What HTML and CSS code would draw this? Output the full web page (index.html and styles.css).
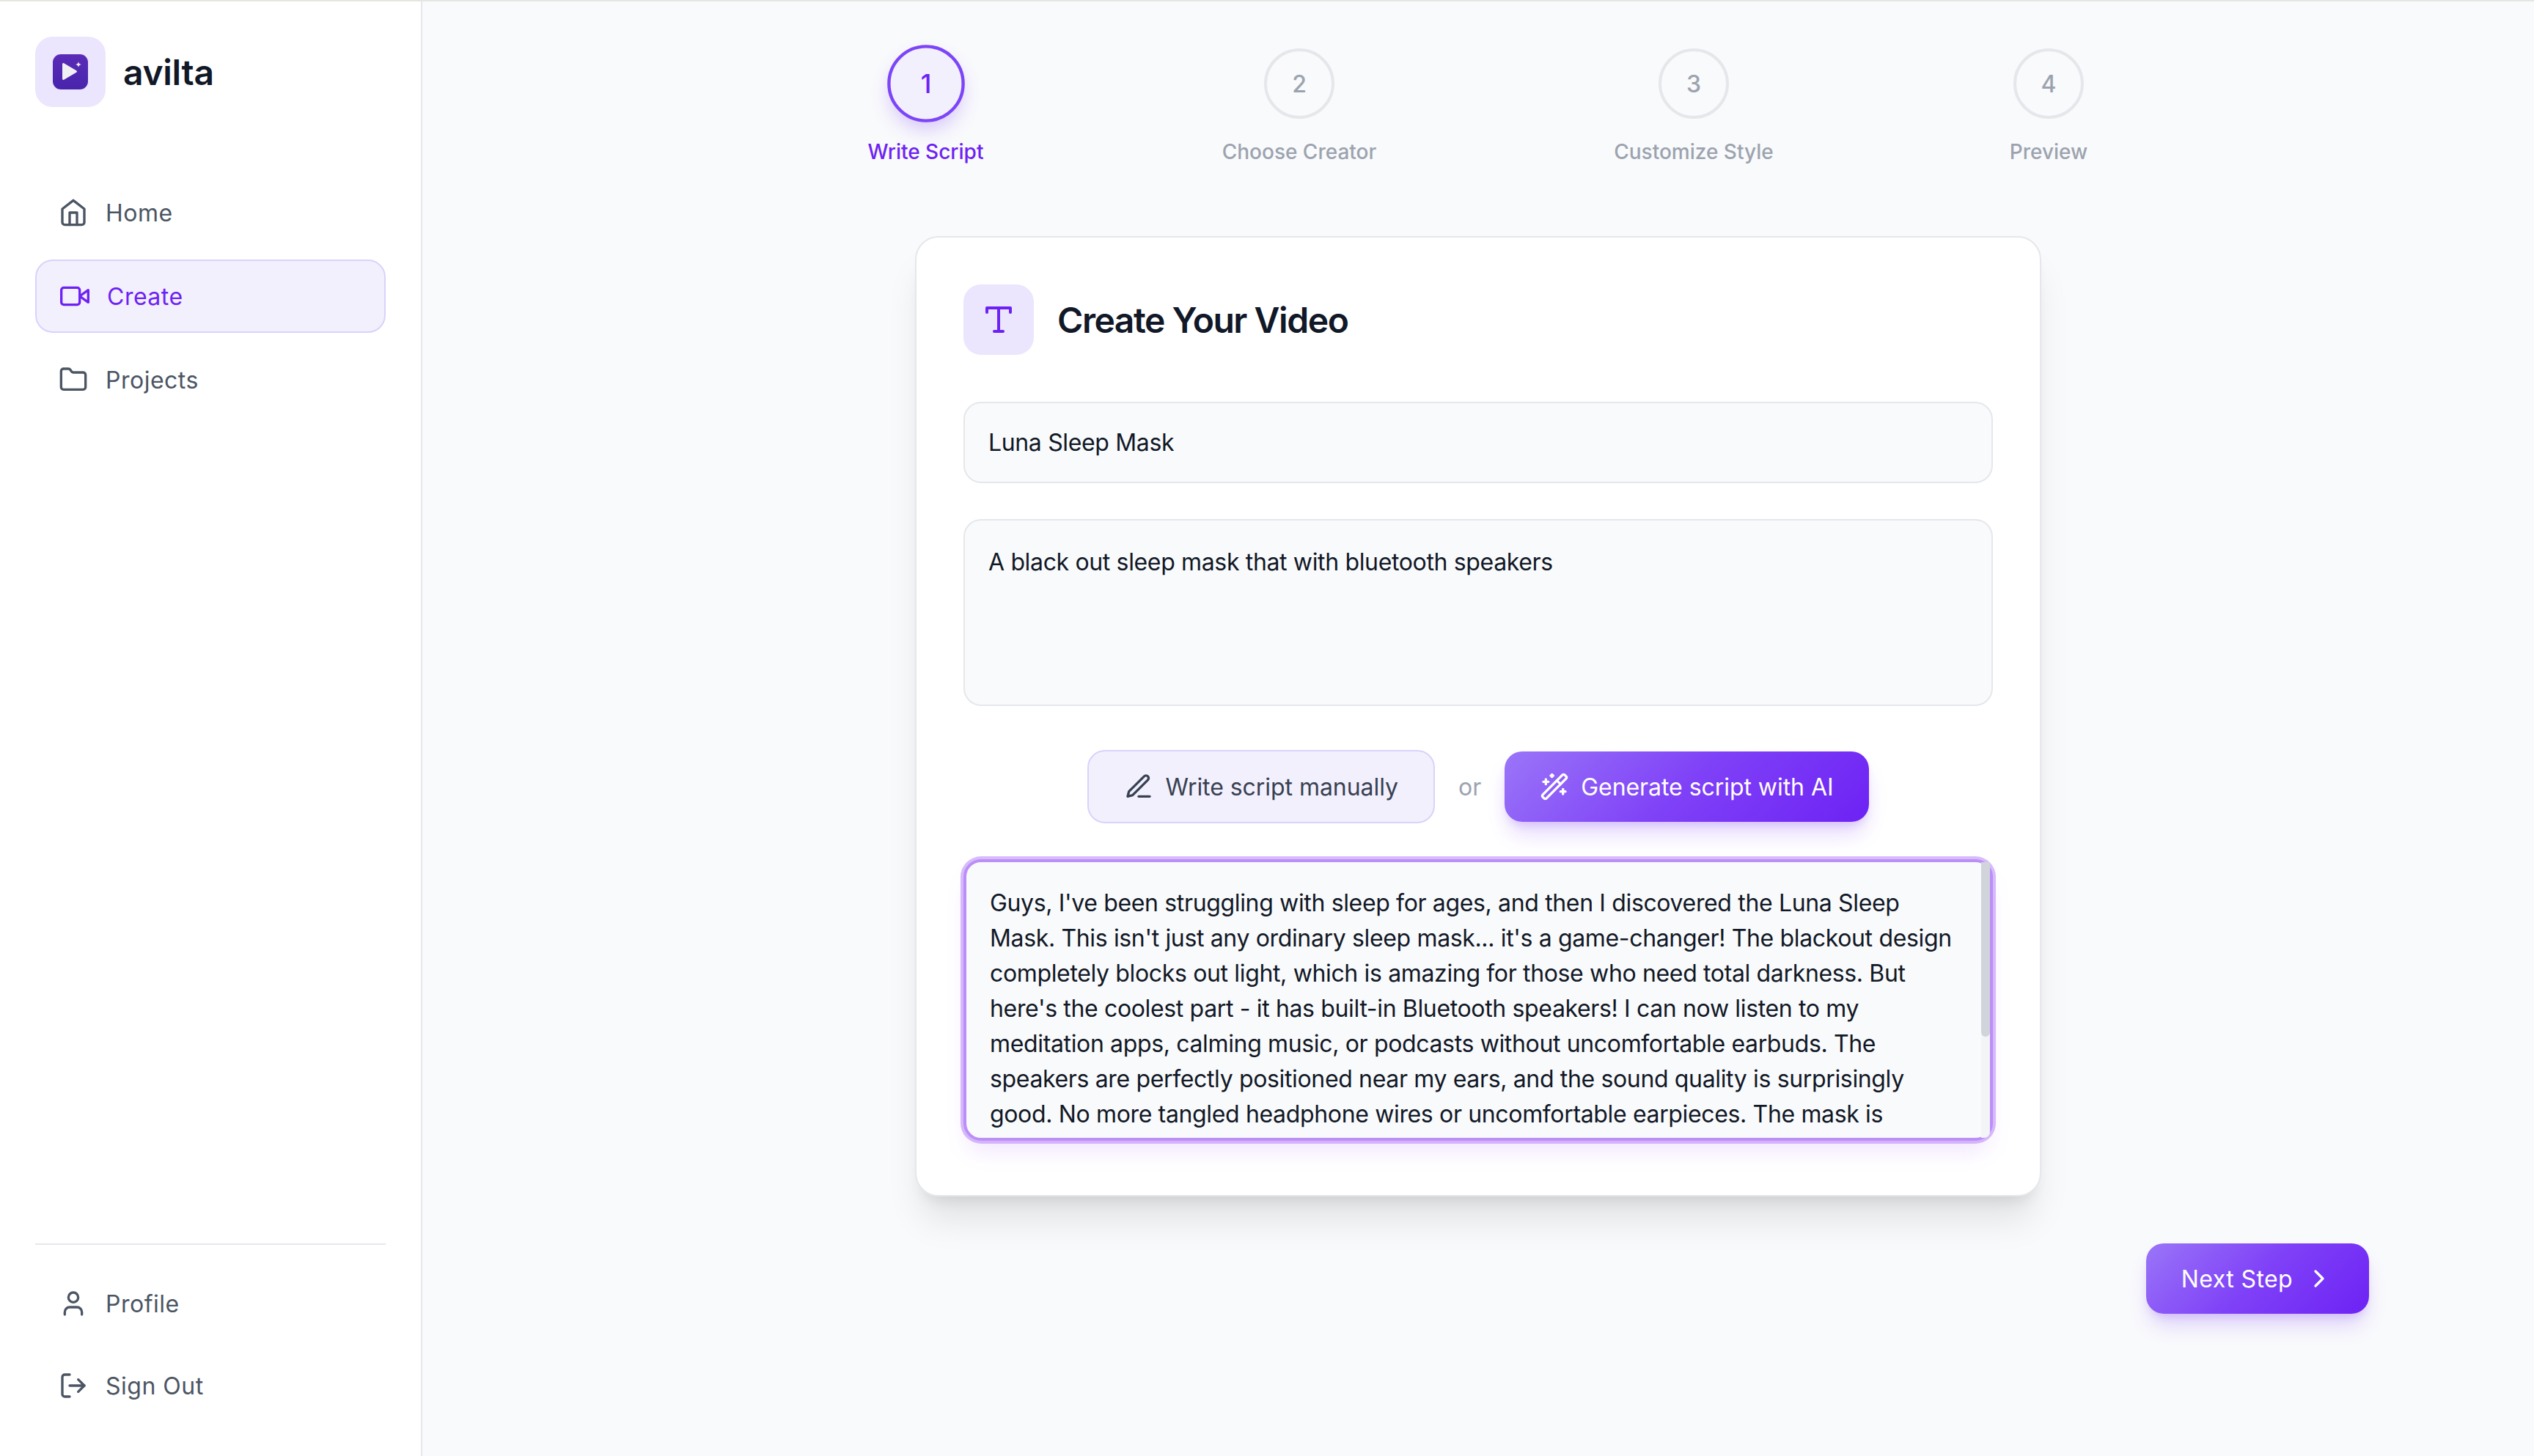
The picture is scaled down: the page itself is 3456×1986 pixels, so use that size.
FILE: index.html
```html
<!DOCTYPE html>
<html lang="en">
<head>
  <meta charset="UTF-8">
  <meta name="viewport" content="width=device-width, initial-scale=1.0">
  <title>avilta - Create</title>
  <link rel="stylesheet" href="styles.css">
</head>
<body>
  <div class="app">

    <!-- sidebar -->
    <aside class="sidebar">
      <div class="brand">
        <div class="brand-box">
          <svg class="brand-logo" viewBox="0 0 48 48">
            <defs>
              <linearGradient id="logo-bg" x1="0" y1="0" x2="0" y2="1">
                <stop offset="0" stop-color="#5a2bb8"/>
                <stop offset="1" stop-color="#4824ab"/>
              </linearGradient>
            </defs>
            <rect width="48" height="48" rx="11" fill="url(#logo-bg)"/>
            <path d="M13 13.5c0-1.2 1.2-1.9 2.2-1.3l17 10c1 .6 1 2 0 2.6l-17 10c-1 .6-2.2-.1-2.2-1.3z" fill="#f1f0f3"/>
            <path d="M35 10c.5 2.7 1.3 3.5 4 4-2.7.5-3.5 1.3-4 4-.5-2.7-1.3-3.5-4-4 2.7-.5 3.5-1.3 4-4z" fill="#f1f0f3"/>
          </svg>
        </div>
        <span class="brand-name">avilta</span>
      </div>

      <nav class="nav">
        <a class="nav-item">
          <svg class="icon" viewBox="0 0 24 24"><path d="m3 9 9-7 9 7v11a2 2 0 0 1-2 2H5a2 2 0 0 1-2-2z"/><polyline points="9 22 9 12 15 12 15 22"/></svg>
          Home
        </a>
        <a class="nav-item active">
          <svg class="icon" viewBox="0 0 24 24"><polygon points="23 7 16 12 23 17 23 7"/><rect x="1" y="5" width="15" height="14" rx="2"/></svg>
          Create
        </a>
        <a class="nav-item">
          <svg class="icon" viewBox="0 0 24 24"><path d="M20 20a2 2 0 0 0 2-2V8a2 2 0 0 0-2-2h-7.9a2 2 0 0 1-1.69-.9L9.6 3.9A2 2 0 0 0 7.93 3H4a2 2 0 0 0-2 2v13a2 2 0 0 0 2 2Z"/></svg>
          Projects
        </a>
      </nav>

      <div class="nav nav-bottom">
        <a class="nav-item">
          <svg class="icon" viewBox="0 0 24 24"><path d="M19 21v-2a4 4 0 0 0-4-4H9a4 4 0 0 0-4 4v2"/><circle cx="12" cy="7" r="4"/></svg>
          Profile
        </a>
        <a class="nav-item">
          <svg class="icon" viewBox="0 0 24 24"><path d="M9 21H5a2 2 0 0 1-2-2V5a2 2 0 0 1 2-2h4"/><polyline points="16 17 21 12 16 7"/><line x1="21" y1="12" x2="9" y2="12"/></svg>
          Sign Out
        </a>
      </div>
    </aside>

    <!-- main -->
    <main class="main">
      <ol class="steps">
        <li class="step current"><span class="step-num">1</span><span class="step-label">Write Script</span></li>
        <li class="step"><span class="step-num">2</span><span class="step-label">Choose Creator</span></li>
        <li class="step"><span class="step-num">3</span><span class="step-label">Customize Style</span></li>
        <li class="step"><span class="step-num">4</span><span class="step-label">Preview</span></li>
      </ol>

      <section class="card">
        <header class="card-head">
          <div class="card-icon">
            <svg class="icon icon-lg" viewBox="0 0 24 24"><polyline points="4 7 4 4 20 4 20 7"/><line x1="9" y1="20" x2="15" y2="20"/><line x1="12" y1="4" x2="12" y2="20"/></svg>
          </div>
          <h1>Create Your Video</h1>
        </header>

        <input class="field field-title" type="text" value="Luna Sleep Mask">
        <textarea class="field field-desc">A black out sleep mask that with bluetooth speakers</textarea>

        <div class="script-actions">
          <button class="btn btn-soft">
            <svg class="icon" viewBox="0 0 24 24"><path d="M12 20h9"/><path d="M16.5 3.5a2.12 2.12 0 0 1 3 3L7 19l-4 1 1-4Z"/></svg>
            Write script manually
          </button>
          <span class="or">or</span>
          <button class="btn btn-primary">
            <svg class="icon" viewBox="0 0 24 24"><path d="m21.64 3.64-1.28-1.28a1.21 1.21 0 0 0-1.72 0L2.36 18.64a1.21 1.21 0 0 0 0 1.72l1.28 1.28a1.2 1.2 0 0 0 1.72 0L21.64 5.36a1.2 1.2 0 0 0 0-1.72"/><path d="m14 7 3 3"/><path d="M5 6v4"/><path d="M19 14v4"/><path d="M10 2v2"/><path d="M7 8H3"/><path d="M21 16h-4"/><path d="M11 3H9"/></svg>
            Generate script with AI
          </button>
        </div>

        <div class="script-box">
          <textarea class="script" wrap="off">Guys, I've been struggling with sleep for ages, and then I discovered the Luna Sleep
Mask. This isn't just any ordinary sleep mask... it's a game-changer! The blackout design
completely blocks out light, which is amazing for those who need total darkness. But
here's the coolest part - it has built-in Bluetooth speakers! I can now listen to my
meditation apps, calming music, or podcasts without uncomfortable earbuds. The
speakers are perfectly positioned near my ears, and the sound quality is surprisingly
good. No more tangled headphone wires or uncomfortable earpieces. The mask is</textarea>
          <div class="scroll-track"><div class="scroll-thumb"></div></div>
        </div>
      </section>

      <div class="footer-actions">
        <button class="btn btn-primary">
          Next Step
          <svg class="icon" viewBox="0 0 24 24"><path d="m9 18 6-6-6-6"/></svg>
        </button>
      </div>
    </main>
  </div>
</body>
</html>
```

FILE: styles.css
```css
* {
  box-sizing: border-box;
}

html, body {
  height: 100%;
}

body {
  margin: 0;
  font-family: 'Inter', 'Noto Sans', sans-serif;
  font-size: 32px;
  color: #111827;
  background-color: #f9fafc;
  border-top: 2px solid #e5e5e1;
  overflow: hidden;
}

.app {
  display: flex;
  height: 100%;
}

.icon {
  width: 40px;
  height: 40px;
  flex-shrink: 0;
  fill: none;
  stroke: currentColor;
  stroke-width: 2;
  stroke-linecap: round;
  stroke-linejoin: round;
}

.icon-lg {
  width: 48px;
  height: 48px;
}

/* sidebar */
.sidebar {
  width: 576px;
  flex-shrink: 0;
  display: flex;
  flex-direction: column;
  padding: 48px;
  background-color: #fff;
  border-right: 2px solid #e5e7eb;
}

.brand {
  display: flex;
  align-items: center;
  gap: 24px;
  margin-bottom: 96px;
}

.brand-box {
  width: 96px;
  height: 96px;
  display: flex;
  align-items: center;
  justify-content: center;
  background-color: #ebe5fd;
  border-radius: 24px;
}

.brand-logo {
  width: 48px;
  height: 48px;
}

.brand-name {
  font-size: 48px;
  font-weight: 600;
  letter-spacing: -0.3px;
}

.nav {
  display: flex;
  flex-direction: column;
  gap: 16px;
}

.nav-item {
  display: flex;
  align-items: center;
  gap: 24px;
  height: 96px;
  padding: 0 32px;
  color: #4b5563;
  border-radius: 24px;
  letter-spacing: 0.5px;
}

.nav-item.active {
  height: 100px;
  color: #6d22f4;
  background-color: #f3f0fe;
  border: 2px solid #d9d2fb;
}

.nav-bottom {
  margin-top: auto;
  padding-top: 32px;
  border-top: 2px solid #e5e7eb;
}

/* main */
.main {
  flex: 1;
  padding: 64px 225px 0 225px;
  min-width: 0;
}

.steps {
  display: grid;
  grid-template-columns: 158px 213px 215px 105px;
  justify-content: center;
  column-gap: 324px;
  list-style: none;
  margin: 0 0 95px;
  padding: 0 2px 0 0;
}

.step {
  display: flex;
  flex-direction: column;
  align-items: center;
  color: #9ca3af;
}

.step-num {
  width: 96px;
  height: 96px;
  display: flex;
  align-items: center;
  justify-content: center;
  font-weight: 500;
  border: 4px solid #e5e7eb;
  border-radius: 50%;
}

.step-label {
  margin-top: 25px;
  font-size: 28px;
  line-height: 40px;
  font-weight: 500;
  white-space: nowrap;
}

.step.current {
  color: #6d22f4;
}

.step.current .step-num {
  transform: scale(1.1);
  background-color: #f3f0fe;
  border-color: #7c45f7;
  box-shadow: 0 12px 24px -4px rgba(109, 34, 244, 0.25);
}

.card {
  width: 1536px;
  margin: 0 auto;
  padding: 64px;
  background-color: #fff;
  border: 2px solid #e5e7eb;
  border-radius: 32px;
  box-shadow: 0 40px 50px -10px rgba(0, 0, 0, 0.1), 0 16px 20px -12px rgba(0, 0, 0, 0.1);
}

.card-head {
  display: flex;
  align-items: center;
  gap: 32px;
  margin-bottom: 64px;
}

.card-icon {
  width: 96px;
  height: 96px;
  display: flex;
  align-items: center;
  justify-content: center;
  color: #6d22f4;
  background-color: #ebe5fd;
  border-radius: 24px;
}

h1 {
  margin: 0;
  font-size: 48px;
  font-weight: 600;
  letter-spacing: -1.45px;
}

.field {
  display: block;
  width: 100%;
  padding: 32px;
  font: inherit;
  line-height: 48px;
  letter-spacing: -0.35px;
  color: #111827;
  background-color: #f9fafb;
  border: 2px solid #e5e7eb;
  border-radius: 24px;
  outline: none;
  resize: none;
}

.field-title {
  height: 111px;
  margin-bottom: 49px;
}

.field-desc {
  height: 255px;
  padding-top: 33px;
}

.script-actions {
  display: flex;
  align-items: center;
  justify-content: center;
  gap: 32px;
  margin: 60px 0 49px;
}

.or {
  color: #9ca3af;
}

.btn {
  display: flex;
  align-items: center;
  gap: 16px;
  height: 96px;
  padding: 0 48px;
  font: inherit;
  letter-spacing: -0.05px;
  border: none;
  border-radius: 24px;
  cursor: pointer;
}

.btn-soft {
  height: 100px;
  padding: 0 48px;
  color: #374151;
  background-color: #f3f0fe;
  border: 2px solid #d9d2fb;
}

.btn-primary {
  color: #fff;
  background: linear-gradient(135deg, #9a75f8 0%, #7f41f7 50%, #6d22f4 100%);
  box-shadow: 0 20px 30px -6px rgba(109, 34, 244, 0.2), 0 8px 12px -4px rgba(109, 34, 244, 0.15);
}

.script-box {
  position: relative;
  margin-bottom: 10px;
}

.script {
  display: block;
  width: 100%;
  height: 384px;
  padding: 32px;
  font: inherit;
  line-height: 48px;
  letter-spacing: -0.35px;
  color: #111827;
  background-color: #f9fafb;
  border: 4px solid #bc8ef8;
  border-radius: 24px;
  box-shadow: 0 0 0 4px rgba(188, 142, 248, 0.6), 0 20px 30px -6px rgba(168, 85, 247, 0.15);
  outline: none;
  resize: none;
  overflow: hidden;
}

/* screenshot browser hides real scrollbars, so draw it over the textarea */
.scroll-track {
  position: absolute;
  top: 4px;
  right: 4px;
  bottom: 4px;
  width: 12px;
  background-color: #f3f4f6;
  border-radius: 0 8px 8px 0;
}

.scroll-thumb {
  height: 238px;
  background-color: #d1d5db;
  border-radius: 0 0 6px 6px;
}

.footer-actions {
  display: flex;
  justify-content: flex-end;
  margin-top: 64px;
}

.footer-actions .btn {
  letter-spacing: 0.4px;
}
```
